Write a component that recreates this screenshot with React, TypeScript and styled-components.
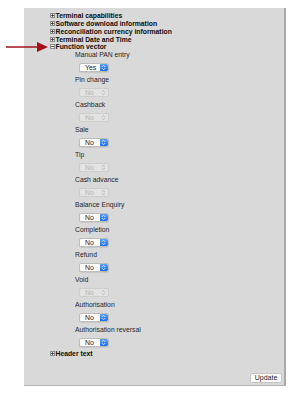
import React from 'react';
import styled, { createGlobalStyle } from 'styled-components';

const Global = createGlobalStyle`
  html, body { margin: 0; padding: 0; background: #ffffff; }
  body { font-family: "Liberation Sans", Arial, Helvetica, sans-serif; }
`;

const Page = styled.div`
  position: relative;
  width: 296px;
  height: 398px;
  padding: 8px 0 0 24px;
  box-sizing: border-box;
`;

const Panel = styled.div`
  width: 262px;
  height: 378px;
  box-sizing: border-box;
  background: #d9d9d9;
  border-right: 2px solid #a9a9a9;
  border-bottom: 1px solid #b3b3b3;
  padding: 4px 2px 2px 26px;
  display: flex;
  flex-direction: column;
`;

const TreeRow = styled.div`
  display: flex;
  align-items: center;
  height: 7.75px;
  font-size: 6.8px;
  font-weight: bold;
  color: #0d0d0d;
  white-space: nowrap;
`;

const Toggle = styled.span`
  width: 5px;
  height: 5px;
  box-sizing: border-box;
  border: 0.8px solid #8c8c8c;
  background: #f2f2f2;
  margin-right: 0.5px;
  display: inline-flex;
  align-items: center;
  justify-content: center;
  flex: none;
`;

const Children = styled.div`
  padding-left: 25px;
  display: flex;
  flex-direction: column;
  margin-bottom: -1px;
`;

const Field = styled.div`
  display: flex;
  flex-direction: column;
  align-items: flex-start;
`;

const Label = styled.div`
  font-size: 6.8px;
  line-height: 8px;
  height: 8px;
  color: #1f1f1f;
  white-space: nowrap;
`;

const SelectBox = styled.div<{ $disabled?: boolean }>`
  margin: 4px 0 4px 4px;
  width: 30px;
  height: 9px;
  box-sizing: border-box;
  display: flex;
  align-items: stretch;
  border-radius: 2px;
  border: 0.6px solid ${p => (p.$disabled ? '#cdcdcd' : '#bdbdbd')};
  background: ${p => (p.$disabled ? '#e3e3e3' : '#ffffff')};
  box-shadow: ${p => (p.$disabled ? 'none' : '0 0.5px 0.5px rgba(0,0,0,0.15)')};
  overflow: hidden;
`;

const SelectValue = styled.span<{ $disabled?: boolean }>`
  flex: 1;
  font-size: 6.9px;
  line-height: 8px;
  padding-left: 5px;
  color: ${p => (p.$disabled ? '#b4b4b4' : '#1a1a1a')};
`;

const Stepper = styled.span<{ $disabled?: boolean }>`
  width: 8.5px;
  display: flex;
  align-items: center;
  justify-content: center;
  border-radius: 0 1.5px 1.5px 0;
  background: ${p => (p.$disabled ? 'transparent' : 'linear-gradient(#5aa2fb, #1f6fe6)')};
`;

const Footer = styled.div`
  margin-top: auto;
  display: flex;
  justify-content: flex-end;
`;

const UpdateButton = styled.button`
  width: 32px;
  height: 10px;
  padding: 0;
  box-sizing: border-box;
  background: #ffffff;
  border: 0.6px solid #c4c4c4;
  border-radius: 2px;
  font-family: "Liberation Sans", Arial, sans-serif;
  font-size: 7px;
  line-height: 8px;
  color: #222;
`;

const ArrowMark = styled.svg`
  position: absolute;
  left: 5px;
  top: 41px;
`;

const Plus: React.FC<{ open?: boolean }> = ({ open }) => (
  <svg width="3" height="3" viewBox="0 0 3 3">
    <path d="M0 1.5 H3" stroke="#333" strokeWidth="0.8" />
    {!open && <path d="M1.5 0 V3" stroke="#333" strokeWidth="0.8" />}
  </svg>
);

const Chevrons: React.FC<{ disabled?: boolean }> = ({ disabled }) => (
  <svg width="5" height="7" viewBox="0 0 5 7">
    <path
      d="M1 2.8 L2.5 1.3 L4 2.8 M1 4.2 L2.5 5.7 L4 4.2"
      fill="none"
      stroke={disabled ? '#a9a9a9' : '#ffffff'}
      strokeWidth="0.8"
    />
  </svg>
);

const Select: React.FC<{ value: string; disabled?: boolean }> = ({ value, disabled }) => (
  <SelectBox $disabled={disabled}>
    <SelectValue $disabled={disabled}>{value}</SelectValue>
    <Stepper $disabled={disabled}>
      <Chevrons disabled={disabled} />
    </Stepper>
  </SelectBox>
);

const fields: { label: string; value: string; disabled?: boolean }[] = [
  { label: 'Manual PAN entry', value: 'Yes' },
  { label: 'Pin change', value: 'No', disabled: true },
  { label: 'Cashback', value: 'No', disabled: true },
  { label: 'Sale', value: 'No' },
  { label: 'Tip', value: 'No', disabled: true },
  { label: 'Cash advance', value: 'No', disabled: true },
  { label: 'Balance Enquiry', value: 'No' },
  { label: 'Completion', value: 'No' },
  { label: 'Refund', value: 'No' },
  { label: 'Void', value: 'No', disabled: true },
  { label: 'Authorisation', value: 'No' },
  { label: 'Authorisation reversal', value: 'No' },
];

const topNodes = [
  'Terminal capabilities',
  'Software download information',
  'Reconciliation currency information',
  'Terminal Date and Time',
];

export default function App() {
  return (
    <Page>
      <Global />
      <Panel>
        {topNodes.map(n => (
          <TreeRow key={n}>
            <Toggle>
              <Plus />
            </Toggle>
            {n}
          </TreeRow>
        ))}
        <TreeRow>
          <Toggle>
            <Plus open />
          </Toggle>
          Function vector
        </TreeRow>
        <Children>
          {fields.map(f => (
            <Field key={f.label}>
              <Label>{f.label}</Label>
              <Select value={f.value} disabled={f.disabled} />
            </Field>
          ))}
        </Children>
        <TreeRow>
          <Toggle>
            <Plus />
          </Toggle>
          Header text
        </TreeRow>
        <Footer>
          <UpdateButton>Update</UpdateButton>
        </Footer>
      </Panel>
      <ArrowMark width="45" height="12" viewBox="0 0 45 12">
        <path d="M1 6 H34" stroke="#a3101a" strokeWidth="1.3" />
        <polygon points="32,1 43,6 32,11" fill="#a3101a" />
      </ArrowMark>
    </Page>
  );
}
